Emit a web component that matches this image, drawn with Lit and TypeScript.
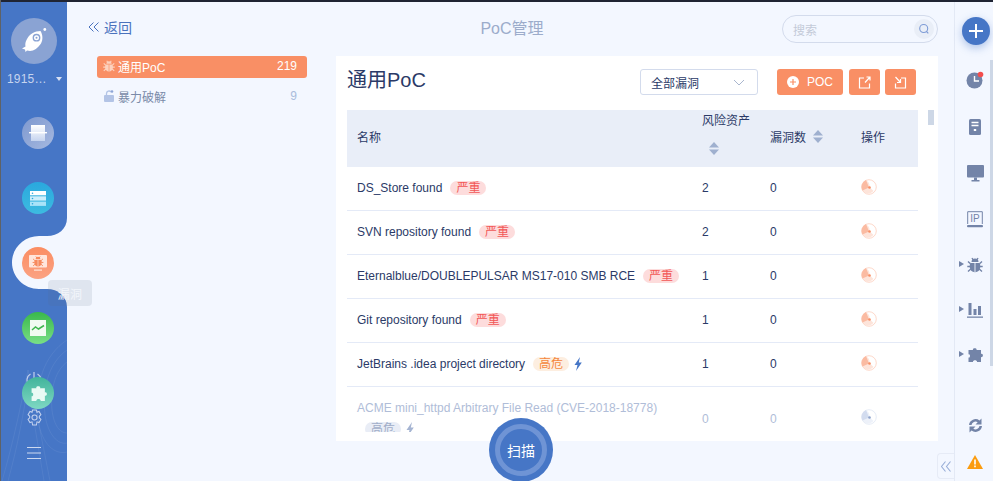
import { LitElement, html, css, svg } from "lit";
import { customElement } from "lit/decorators.js";

const bug = (c: string, gap: string) => svg`<g fill=${c}><path d="M3.500 6h9c.6 1 .8 2 .8 3.500 0 3.500-2.300 5.700-5.300 5.700S2.700 13 2.700 9.500C2.700 8 2.900 7 3.500 6z"/><path d="M4.500 5a3.500 3.500 0 0 1 7 0z"/></g><path d="M8 6v9" stroke=${gap} stroke-width=".9"/><path d="M1 4.500l2.500 2.300M15 4.500l-2.500 2.300M.3 9.500h3M15.700 9.500h-3M1 14.500l2.800-2.500M15 14.500L12.200 12M5 1l1.200 2M11 1L9.800 3" stroke=${c} stroke-width="1.400" fill="none"/>`;
const puzzle = (c: string) => svg`<path fill=${c} d="M6 3C5 .5 10.500 .5 9.500 3H14V7C16.500 6 16.500 11 14 10V15H10C10.500 12.500 5.500 12.500 6 15H1.500V10.500C3.500 11.500 3.500 6.500 1.500 7.500V3Z"/>`;

const rows = [
  { name: "DS_Store found", tag: "严重", kind: "crit", risk: 2, vuln: 0 },
  { name: "SVN repository found", tag: "严重", kind: "crit", risk: 2, vuln: 0 },
  { name: "Eternalblue/DOUBLEPULSAR MS17-010 SMB RCE", tag: "严重", kind: "crit", risk: 1, vuln: 0 },
  { name: "Git repository found", tag: "严重", kind: "crit", risk: 1, vuln: 0 },
  { name: "JetBrains .idea project directory", tag: "高危", kind: "high", bolt: true, risk: 1, vuln: 0 },
  { name: "ACME mini_httpd Arbitrary File Read (CVE-2018-18778)", tag: "高危", kind: "mute", bolt: true, risk: 0, vuln: 0, faded: true },
];

@customElement("app-root")
export class AppRoot extends LitElement {
  static styles = css`
    :host { display: block; width: 993px; height: 481px; overflow: hidden; font-family: "Liberation Sans", "Noto Sans CJK SC", sans-serif; font-size: 12px; color: #2b3a67; }
    * { box-sizing: border-box; }
    svg { display: block; }
    .page { position: relative; display: flex; width: 993px; height: 481px; padding-top: 2px; background: #f3f7ff; overflow: hidden; }
    .strip { position: absolute; left: 0; top: 0; width: 993px; height: 2px; background: #1f2433; z-index: 9; }
    .edge { position: absolute; left: 0; top: 0; width: 1px; height: 481px; background: #5f6266; z-index: 9; }

    .side { position: relative; flex: 0 0 67px; height: 479px; display: flex; flex-direction: column; align-items: flex-start; }
    .side-bg { position: absolute; left: 0; top: -2px; }
    .logo { position: relative; margin: 16px 0 0 11px; width: 46px; height: 46px; border-radius: 50%; background: #8aa3d3; display: flex; align-items: center; justify-content: center; }
    .user { position: relative; display: flex; align-items: center; margin: 7px 0 0 7px; height: 16px; color: #c6d4ee; font-size: 12px; letter-spacing: .2px; }
    .caret { margin-left: 9px; width: 0; height: 0; border: 3px solid transparent; border-top: 4px solid #d7e0f3; border-bottom: 0; }
    .nav { position: relative; display: flex; flex-direction: column; gap: 33px; margin: 30px 0 0 22px; z-index: 2; }
    .dot { width: 32px; height: 32px; border-radius: 50%; display: flex; align-items: center; justify-content: center; }
    .d1 { background: linear-gradient(135deg, #7d98cf, #a6b9e0); }
    .d2 { background: linear-gradient(180deg, #2aa8de, #3dbbe0); }
    .d3 { background: linear-gradient(180deg, #fb8d62, #fba283); }
    .d4 { background: linear-gradient(180deg, #39b84b, #79df86); }
    .d5 { background: linear-gradient(180deg, #42b49b, #7ed8c3); }
    .foot { position: absolute; left: 26px; }
    .power { top: 370px; }
    .gear { top: 407px; }
    .menu { top: 444px; }
    .tip { position: absolute; left: 48px; top: 280px; width: 44px; height: 26px; border-radius: 4px; background: rgba(90,105,135,.13); color: #f3f6fb; display: flex; align-items: center; justify-content: center; z-index: 3; letter-spacing: .3px; }

    .main { flex: 1; min-width: 0; display: flex; flex-direction: column; }
    .top { height: 54px; display: grid; grid-template-columns: 1fr auto 1fr; align-items: center; padding: 0 16px 0 21px; }
    .back { display: flex; align-items: center; gap: 4px; color: #4a72bd; font-size: 14px; margin-bottom: 4px; }
    .title { color: #9caccb; font-size: 16px; margin: 0 2px 5px 0; }
    .search { justify-self: end; width: 156px; height: 28px; border: 1px solid #d3dbec; border-radius: 14px; display: flex; align-items: center; justify-content: space-between; padding: 0 3px 0 10px; color: #c3cad8; background: #f3f7ff; }
    .glass { width: 20px; height: 20px; border-radius: 50%; background: #e9eef7; display: flex; align-items: center; justify-content: center; }
    .content { display: flex; flex: 1; }
    .cats { flex: 0 0 269px; padding-left: 30px; }
    .cat { width: 210px; height: 22px; border-radius: 3px; display: flex; align-items: center; padding: 0 10px 2px 6px; color: #7a8aa8; margin-bottom: 8px; }
    .cat .ic { width: 12px; margin-right: 3px; }
    .cat .n { margin-left: auto; color: #a9bcdc; }
    .cat.on { background: #f98f65; color: #fff; }
    .cat.on .n { color: #fff; }

    .card { position: relative; width: 602px; height: 385px; background: #fff; padding: 13px 22px 0 11px; }
    .head { display: flex; align-items: center; height: 26px; }
    .h1 { font-size: 20px; color: #2b3a67; margin-right: auto; margin-bottom: 7px; }
    .select { width: 118px; height: 26px; border: 1px solid #d3dbec; border-radius: 3px; display: flex; align-items: center; justify-content: space-between; padding: 0 12px 0 10px; margin-right: 19px; color: #2b3a67; }
    .btn { height: 26px; border-radius: 3px; background: #f98f65; color: #fff; display: flex; align-items: center; justify-content: center; }
    .poc { width: 66px; gap: 8px; margin-right: 6px; }
    .sq { width: 31px; }
    .sq + .sq { margin-left: 5px; }
    .table { margin-top: 15px; width: 571px; height: 322px; overflow: hidden; }
    .tr { display: grid; grid-template-columns: 345px 68px 91px 67px; }
    .th { height: 57px; background: #e9eef8; color: #2b3a67; align-items: center; }
    .th > div { padding: 0 0 4px 10px; }
    .th > .stack { display: flex; flex-direction: column; gap: 14px; align-items: flex-start; align-self: start; padding: 1px 0 0 10px; }
    .th .stack svg { margin-left: 7px; }
    .th .inline { display: flex; align-items: center; gap: 7px; }
    .td { border-bottom: 1px solid #e4eaf7; align-items: center; }
    .td > div { padding: 11px 10px; line-height: 21px; }
    .td > .op { padding-top: 0; padding-bottom: 4px; }
    .td.faded { color: #b0bdd8; }
    .badge { display: inline-block; width: 36px; height: 14px; border-radius: 7px; margin-left: 8px; line-height: 14px; font-size: 12px; text-align: center; vertical-align: middle; position: relative; top: -1px; }
    .crit { background: #fddcdc; color: #f25757; }
    .high { background: #fdeee0; color: #f5873c; }
    .mute { background: #e9edf6; color: #a1aec8; }
    .bolt { display: inline-block; margin-left: 5px; vertical-align: middle; position: relative; top: -1px; }
    .thumb { position: absolute; left: 592px; top: 54px; width: 6px; height: 15px; background: #cdd7e6; }

    .rail { position: relative; flex: 0 0 39px; border-left: 1px solid #e3e9f5; display: flex; flex-direction: column; align-items: center; padding-left: 2px; }
    .plus { flex: none; width: 28px; height: 28px; border-radius: 50%; background: #4676c6; box-shadow: 0 3px 8px rgba(70,118,198,.4); display: flex; align-items: center; justify-content: center; margin: 15px 0 11px 2px; }
    .ri { flex: none; position: relative; height: 45px; width: 34px; display: flex; align-items: center; justify-content: center; }
    .ri.t { height: 47px; }
    .tri { position: absolute; left: 1px; top: 19px; width: 0; height: 0; border: 3.500px solid transparent; border-left: 5px solid #7384a8; border-right: 0; }
    .sync { height: 30px; margin-top: 33px; }
    .warn { height: 30px; margin-top: 7px; }
    .bar { position: absolute; left: 35px; top: 58px; width: 3px; height: 306px; background: #cdd7e6; }
    .collapse { position: absolute; left: 937px; top: 453px; width: 17px; height: 26px; border: 1px solid #e6ebf6; border-right: 0; border-radius: 4px 0 0 4px; display: flex; align-items: center; justify-content: center; background: #f3f7ff; }

    .scan { position: absolute; left: 489px; top: 418px; width: 64px; height: 64px; border-radius: 50%; background: #4676c6; display: flex; align-items: center; justify-content: center; z-index: 4; }
    .scan span { width: 52px; height: 52px; border-radius: 50%; border: 5px solid #6f94d5; color: #fff; font-size: 14px; display: flex; align-items: center; justify-content: center; }
  `;

  sort() {
    return html`<svg width="10" height="13" viewBox="0 0 10 13"><path d="M5 0l5 5.500H0z" fill="#9fb0cf"/><path d="M5 13l5-5.500H0z" fill="#9fb0cf"/></svg>`;
  }

  radar(muted: boolean) {
    const a = muted ? "#d3dcef" : "#fbbba2";
    const d = muted ? "#8ea2cb" : "#f98f65";
    return html`<svg class="radar" width="16" height="16" viewBox="0 0 16 16"><circle cx="8" cy="8" r="7.300" fill="none" stroke=${a} stroke-width=".8" opacity=".7"/><path d="M8 8.500L5 1A7.500 7.500 0 0 0 1.500 11.500z" fill=${a}/><path d="M5 1.500c2 .8 3.500 2.500 4 7L12.500 12c-3 3.500-8 3-10.500-.5z" fill=${a} opacity=".4"/><circle cx="8.500" cy="8.500" r="1.300" fill=${d}/></svg>`;
  }

  render() {
    return html`<div class="page">
      <div class="strip"></div><div class="edge"></div>
      <aside class="side">
        <svg class="side-bg" width="67" height="481" viewBox="0 0 67 481">
          <path fill="#4676c6" d="M0 0H67V218C67 229 58 236 47 236H39C24 236 12 248 12 262.500C12 277 24 289 39 289H47C58 289 67 296 67 307V481H0Z"/>
          <g fill="none" stroke="#fff" stroke-opacity=".09" stroke-width=".7">
            <path d="M2 481C14 440 22 400 28 370C34 400 42 440 50 481"/><path d="M8 481C18 445 24 410 28 385C32 410 38 445 44 481"/>
            <path d="M67 340C44 355 34 385 38 420C42 445 55 455 67 452"/><path d="M67 350C50 362 42 385 45 415C48 435 58 445 67 443"/>
            <path d="M67 362C56 370 50 388 52 410C54 426 60 433 67 433"/>
          </g>
        </svg>
        <div class="logo">
          <svg width="30" height="30" viewBox="0 0 30 30"><path fill="#fff" d="M21.500 5C24 9 24 14 22 17.500C19 22 15 25 11 25L8 24.500L6.500 26L6 23.500L3 22.500L6.500 20.500C6 18 6.500 16 7.500 14C10 8 16 5 21.500 5Z"/><circle cx="17.500" cy="11.700" r="3.200" fill="#fff" stroke="#8aa3d3" stroke-width="1.400"/><circle cx="17.500" cy="11.700" r="1" fill="#8aa3d3"/><circle cx="25.800" cy="3.500" r="1.400" fill="#fff"/></svg>
        </div>
        <div class="user">1915…<i class="caret"></i></div>
        <nav class="nav">
          <div class="dot d1"><svg width="18" height="16" viewBox="0 0 18 16"><defs><linearGradient id="g1" x1="0" y1="0" x2="0" y2="1"><stop offset="0" stop-color="#fff"/><stop offset="1" stop-color="#c6d4ef"/></linearGradient></defs><rect x="2" y="0" width="14" height="16" fill="url(#g1)"/><rect x="0" y="7" width="18" height="1.400" fill="#fff"/></svg></div>
          <div class="dot d2"><svg width="16" height="15" viewBox="0 0 16 15"><rect y="0" width="16" height="4.300" fill="#fff"/><rect y="5.300" width="16" height="4.300" fill="#cdeefb"/><rect y="10.600" width="16" height="4.300" fill="#a9e3f8"/><g fill="#2aa8de"><circle cx="2.500" cy="2.200" r=".8"/><circle cx="2.500" cy="7.500" r=".8"/><circle cx="2.500" cy="12.800" r=".8"/></g></svg></div>
          <div class="dot d3"><svg width="18" height="16" viewBox="0 0 18 16"><rect width="18" height="12.500" rx="1" fill="#ffe6dc"/><rect x="5" y="14.500" width="8" height="1.200" fill="#ffe6dc"/><g transform="translate(3.400 .8) scale(.7)">${bug("#f78a5e", "#ffe6dc")}</g></svg></div>
          <div class="dot d4"><svg width="16" height="16" viewBox="0 0 16 16"><rect width="16" height="16" fill="#f1fbf1"/><path d="M2 10l3.500-3 3 2L14 5.500" fill="none" stroke="#3fb64e" stroke-width="1.500"/></svg></div>
          <div class="dot d5"><svg width="17" height="17" viewBox="0 0 16 16">${puzzle("#e9faf4")}</svg></div>
        </nav>
        <svg class="foot power" width="16" height="16" viewBox="0 0 16 16"><path d="M4.500 2a7 7 0 1 0 7 0M8 0v7" fill="none" stroke="#c3d1ee" stroke-width="1.200"/></svg>
        <svg class="foot gear" width="17" height="17" viewBox="0 0 18 18"><path fill="none" stroke="#c3d1ee" stroke-width="1.100" d="M7 1h4l.6 2.400 2.200-.8 2 3.400-1.700 1.700v1.600L15.800 11l-2 3.400-2.200-.8L11 17H7l-.6-3.400-2.200.8-2-3.400 1.700-1.700V7.700L2.200 6l2-3.400 2.200.8z"/><circle cx="9" cy="9" r="2.700" fill="none" stroke="#c3d1ee" stroke-width="1.100"/></svg>
        <svg class="foot menu" width="16" height="14" viewBox="0 0 16 14"><path d="M1 1.500h14M1 7h14M1 12.500h14" stroke="#cdd9f0" stroke-width="1"/></svg>
      </aside>
      <div class="tip">漏洞</div>

      <main class="main">
        <header class="top">
          <div class="back"><svg width="12" height="10" viewBox="0 0 12 10"><path d="M5.500 .5L1 5l4.500 4.500M10.500 .5L6 5l4.500 4.500" fill="none" stroke="#4a72bd" stroke-width="1"/></svg>返回</div>
          <div class="title">PoC管理</div>
          <div class="search">搜索<span class="glass"><svg width="12" height="12" viewBox="0 0 12 12"><circle cx="5.700" cy="5.500" r="4" fill="none" stroke="#7d9bd6" stroke-width="1.100"/><path d="M8.500 8.500l1.800 1.800" stroke="#7d9bd6" stroke-width="1.100"/></svg></span></div>
        </header>
        <div class="content">
          <section class="cats">
            <div class="cat on"><svg class="ic" width="12" height="12" viewBox="0 0 16 16">${bug("#fcd2bf", "#f98f65")}</svg>通用PoC<span class="n">219</span></div>
            <div class="cat"><svg class="ic" width="12" height="12" viewBox="0 0 12 12"><rect x="1" y="5" width="10" height="7" rx="1" fill="#b3c4e6"/><path d="M3.500 5V3.500a2.500 2.500 0 0 1 4.500-1.500" fill="none" stroke="#b3c4e6" stroke-width="1.300"/><circle cx="9" cy="1.500" r="1.300" fill="#8da5d6"/></svg>暴力破解<span class="n">9</span></div>
          </section>
          <section class="card">
            <div class="head">
              <div class="h1">通用PoC</div>
              <div class="select">全部漏洞<svg width="12" height="7" viewBox="0 0 12 7"><path d="M1 1l5 5 5-5" fill="none" stroke="#a9b6ce" stroke-width="1"/></svg></div>
              <div class="btn poc"><svg width="12" height="12" viewBox="0 0 12 12"><circle cx="6" cy="6" r="6" fill="#fff"/><path d="M3 6h6M6 3v6" stroke="#f98f65" stroke-width="1.200"/></svg>POC</div>
              <div class="btn sq"><svg width="13" height="13" viewBox="0 0 13 13"><path d="M6 2H1.500v10h10V7.500M7 6.500L12 1M8.500 1H12v3.500" fill="none" stroke="#fff" stroke-width="1.200"/></svg></div>
              <div class="btn sq"><svg width="13" height="13" viewBox="0 0 13 13"><path d="M7 2h4.500v10h-10V7.500M1.500 1L6.500 6.500M6.500 3v3.500H3" fill="none" stroke="#fff" stroke-width="1.200"/></svg></div>
            </div>
            <div class="table">
              <div class="tr th">
                <div>名称</div>
                <div class="stack">风险资产${this.sort()}</div>
                <div class="inline">漏洞数${this.sort()}</div>
                <div>操作</div>
              </div>
              ${rows.map((r) => html`<div class="tr td ${r.faded ? "faded" : ""}">
                <div>${r.name}<span class="badge ${r.kind}">${r.tag}</span>${r.bolt
                  ? html`<svg class="bolt" width="8" height="14" viewBox="0 0 8 14"><path d="M6 0L.5 8h3L2 14 7.800 5.500H4.800z" fill=${r.faded ? "#a5b4d2" : "#4676c6"}/></svg>`
                  : ""}</div>
                <div>${r.risk}</div>
                <div>${r.vuln}</div>
                <div class="op">${this.radar(!!r.faded)}</div>
              </div>`)}
            </div>
            <div class="thumb"></div>
          </section>
        </div>
      </main>

      <aside class="rail">
        <div class="plus"><svg width="14" height="14" viewBox="0 0 14 14"><path d="M7 0v14M0 7h14" stroke="#fff" stroke-width="2"/></svg></div>
        <div class="ri t"><svg width="18" height="18" viewBox="0 0 18 18"><circle cx="8.500" cy="9.500" r="8" fill="#7384a8"/><path d="M8.500 5v5H13" fill="none" stroke="#fff" stroke-width="1.400"/><circle cx="14.500" cy="3.500" r="2.800" fill="#f34d4d"/></svg></div>
        <div class="ri t"><svg width="12" height="16" viewBox="0 0 12 16"><rect width="12" height="16" rx="1.500" fill="#7384a8"/><path d="M2.500 3.500h7M2.500 6.500h7" stroke="#fff" stroke-width="1.300"/><rect x="4.800" y="10" width="2.400" height="2" fill="#fff"/></svg></div>
        <div class="ri t"><svg width="17" height="17" viewBox="0 0 17 17"><rect width="17" height="12.500" rx="1" fill="#7384a8"/><path d="M7 12.500h3V15H7zM4.500 15h8v1.500h-8z" fill="#7384a8"/></svg></div>
        <div class="ri"><svg width="16" height="17" viewBox="0 0 16 17"><path d="M.7 13V.7h14.600V13" fill="none" stroke="#7384a8" stroke-width="1"/><text x="8" y="10.500" font-size="10" text-anchor="middle" fill="#7384a8" font-family="Liberation Sans">IP</text><rect y="14" width="16" height="2.200" rx="1" fill="#7384a8"/></svg></div>
        <div class="ri"><i class="tri"></i><svg width="16" height="16" viewBox="0 0 16 16">${bug("#7384a8", "#f3f7ff")}</svg></div>
        <div class="ri"><i class="tri"></i><svg width="16" height="16" viewBox="0 0 16 16"><rect x="1.500" y="1" width="3" height="12" fill="#7384a8"/><rect x="6.500" y="7" width="3" height="6" fill="#7384a8"/><rect x="11" y="4" width="3" height="9" fill="#7384a8"/><rect y="14.500" width="16" height="1.300" fill="#7384a8"/></svg></div>
        <div class="ri"><i class="tri"></i><svg width="16" height="16" viewBox="0 0 16 16">${puzzle("#7384a8")}</svg></div>
        <div class="ri sync"><svg width="15" height="15" viewBox="0 0 15 15"><path d="M1 7A6.500 6.500 0 0 1 11.500 2.500L13.500 .5V6.500H7.500L9.700 4.300A4 4 0 0 0 3.500 7zM14 8A6.500 6.500 0 0 1 3.500 12.500L1.500 14.500V8.500H7.500L5.300 10.700A4 4 0 0 0 11.500 8z" fill="#7384a8"/></svg></div>
        <div class="ri warn"><svg width="16" height="14" viewBox="0 0 16 14"><path d="M8 0l8 14H0z" fill="#fb9c0f"/><path d="M7.200 4.500h1.600v5H7.200zM7.200 10.500h1.600v1.700H7.200z" fill="#fff"/></svg></div>
        <div class="bar"></div>
      </aside>
      <div class="collapse"><svg width="10" height="11" viewBox="0 0 10 11"><path d="M4.500 .5L.5 5.500l4 5M9.500 .5L5.500 5.500l4 5" fill="none" stroke="#98aed8" stroke-width="1.100"/></svg></div>
      <div class="scan"><span>扫描</span></div>
    </div>`;
  }
}
